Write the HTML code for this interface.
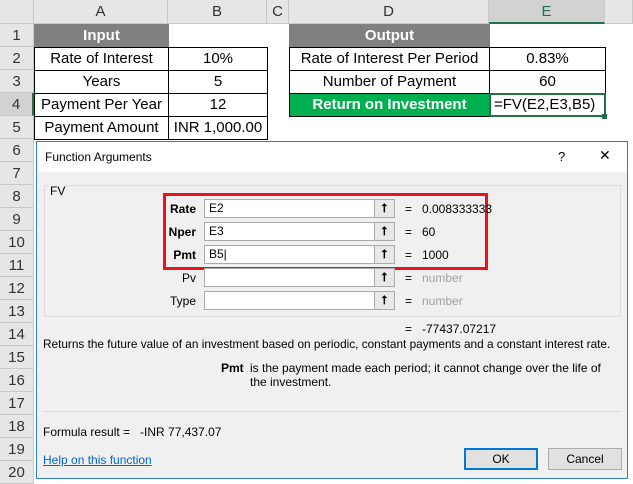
<!DOCTYPE html>
<html><head><style>
*{margin:0;padding:0;box-sizing:border-box}
body{width:633px;height:482px;overflow:hidden;background:#fff;font-family:"Liberation Sans",sans-serif;position:relative}
.a{position:absolute}
.hdr{background:#e6e6e6;color:#333;font-size:15px;text-align:center;border-right:1px solid #c8c8c8;border-bottom:1px solid #c8c8c8}
.rh{background:#e6e6e6;color:#333;font-size:15px;text-align:center;border-bottom:1px solid #c8c8c8;border-right:1px solid #c8c8c8;width:34px;left:0;height:23px;line-height:23px}
.c{font-size:15px;text-align:center;border:1px solid #000;line-height:21px;color:#000}
.g{background:#808080;color:#fff;font-weight:bold}
.dt{font-size:12px;color:#000;font-family:"Liberation Sans",sans-serif}
.lbl{font-size:12px;font-weight:bold;text-align:right;width:60px}
.in{background:#fff;border:1px solid #aaa;height:19px;width:191px;left:204px;font-size:12px;padding-left:4px;line-height:17px}
.btn{left:374px;width:21px;height:19px;border:1px solid #aaa;background:#e8e8e8;font-size:12px;text-align:center;line-height:17px;font-weight:bold}
.eq{left:405px;font-size:12px}
.v{left:422px;font-size:12px}
</style></head><body>
<div class="a hdr" style="left:0;top:0;width:34px;height:24px"></div>
<div class="a hdr" style="left:34px;top:0;width:134px;height:24px;line-height:24px">A</div>
<div class="a hdr" style="left:168px;top:0;width:99px;height:24px;line-height:24px">B</div>
<div class="a hdr" style="left:267px;top:0;width:22px;height:24px;line-height:24px">C</div>
<div class="a hdr" style="left:289px;top:0;width:200px;height:24px;line-height:24px">D</div>
<div class="a hdr" style="left:489px;top:0;width:116px;height:24px;line-height:24px;background:#d2d2d2;color:#217346;border-bottom:2px solid #217346">E</div>
<div class="a hdr" style="left:605px;top:0;width:28px;height:24px"></div>
<div class="a rh" style="top:24px">1</div><div class="a rh" style="top:47px">2</div><div class="a rh" style="top:70px">3</div>
<div class="a rh" style="top:93px;background:#d2d2d2;border-right:2px solid #217346">4</div><div class="a rh" style="top:116px">5</div>
<div class="a rh" style="top:139px">6</div><div class="a rh" style="top:162px">7</div><div class="a rh" style="top:185px">8</div>
<div class="a rh" style="top:208px">9</div><div class="a rh" style="top:231px">10</div><div class="a rh" style="top:254px">11</div>
<div class="a rh" style="top:277px">12</div><div class="a rh" style="top:300px">13</div><div class="a rh" style="top:323px">14</div>
<div class="a rh" style="top:346px">15</div><div class="a rh" style="top:369px">16</div><div class="a rh" style="top:392px">17</div>
<div class="a rh" style="top:415px">18</div><div class="a rh" style="top:438px">19</div><div class="a rh" style="top:461px">20</div>

<div class="a c g" style="left:34px;top:24px;width:135px;height:24px;border-color:#808080">Input</div>
<div class="a c" style="left:34px;top:47px;width:135px;height:24px">Rate of Interest</div>
<div class="a c" style="left:168px;top:47px;width:100px;height:24px">10%</div>
<div class="a c" style="left:34px;top:70px;width:135px;height:24px">Years</div>
<div class="a c" style="left:168px;top:70px;width:100px;height:24px">5</div>
<div class="a c" style="left:34px;top:93px;width:135px;height:24px">Payment Per Year</div>
<div class="a c" style="left:168px;top:93px;width:100px;height:24px">12</div>
<div class="a c" style="left:34px;top:116px;width:135px;height:24px">Payment Amount</div>
<div class="a c" style="left:168px;top:116px;width:100px;height:24px">INR 1,000.00</div>

<div class="a c g" style="left:289px;top:24px;width:201px;height:24px;border-color:#808080">Output</div>
<div class="a c" style="left:289px;top:47px;width:201px;height:24px">Rate of Interest Per Period</div>
<div class="a c" style="left:489px;top:47px;width:117px;height:24px">0.83%</div>
<div class="a c" style="left:289px;top:70px;width:201px;height:24px">Number of Payment</div>
<div class="a c" style="left:489px;top:70px;width:117px;height:24px">60</div>
<div class="a c" style="left:289px;top:93px;width:201px;height:24px;background:#00b050;color:#fff;font-weight:bold">Return on Investment</div>
<div class="a c" style="left:489px;top:93px;width:117px;height:24px;border:2px solid #217346;text-align:left;padding-left:3px;line-height:20px">=FV(E2,E3,B5)</div>
<div class="a" style="left:602px;top:114px;width:5px;height:5px;background:#217346"></div>

<!-- dialog -->
<div class="a" style="left:36px;top:141px;width:592px;height:338px;border:1px solid #2b7cd3;background:#f0f0f0">
  <div class="a" style="left:0;top:0;width:590px;height:30px;background:#fff"></div>
</div>
<div class="a dt" style="left:45px;top:150px;font-size:12px">Function Arguments</div>
<div class="a dt" style="left:558px;top:149px;font-size:13px">?</div>
<div class="a dt" style="left:599px;top:147px;font-size:14px">✕</div>
<div class="a" style="left:44px;top:185px;width:577px;height:132px;border:1px solid #dcdcdc"></div>
<div class="a dt" style="left:49px;top:184px;background:#f0f0f0;padding:0 1px">FV</div>
<div class="a" style="left:163px;top:193px;width:325px;height:77px;border:3px solid #e8131b"></div>

<div class="a lbl" style="left:136px;top:202px">Rate</div>
<div class="a in" style="top:199px">E2</div><div class="a btn" style="top:199px">⭡</div>
<div class="a eq" style="top:202px">=</div><div class="a v" style="top:202px">0.008333333</div>
<div class="a lbl" style="left:136px;top:225px">Nper</div>
<div class="a in" style="top:222px">E3</div><div class="a btn" style="top:222px">⭡</div>
<div class="a eq" style="top:225px">=</div><div class="a v" style="top:225px">60</div>
<div class="a lbl" style="left:136px;top:248px">Pmt</div>
<div class="a in" style="top:245px">B5|</div><div class="a btn" style="top:245px">⭡</div>
<div class="a eq" style="top:248px">=</div><div class="a v" style="top:248px">1000</div>
<div class="a lbl" style="left:136px;top:271px;font-weight:normal">Pv</div>
<div class="a in" style="top:268px"></div><div class="a btn" style="top:268px">⭡</div>
<div class="a eq" style="top:271px">=</div><div class="a v" style="top:271px;color:#a0a0a0">number</div>
<div class="a lbl" style="left:136px;top:294px;font-weight:normal">Type</div>
<div class="a in" style="top:291px"></div><div class="a btn" style="top:291px">⭡</div>
<div class="a eq" style="top:294px">=</div><div class="a v" style="top:294px;color:#a0a0a0">number</div>

<div class="a dt" style="left:405px;top:322px">=&nbsp;&nbsp;&nbsp;-77437.07217</div>
<div class="a dt" style="left:43px;top:337px;font-size:11.8px">Returns the future value of an investment based on periodic, constant payments and a constant interest rate.</div>
<div class="a dt" style="left:221px;top:361px;font-weight:bold">Pmt</div>
<div class="a dt" style="left:250px;top:361px;width:370px;line-height:14px">is the payment made each period; it cannot change over the life of the investment.</div>
<div class="a" style="left:43px;top:411px;width:578px;height:1px;background:#dcdcdc"></div>
<div class="a dt" style="left:43px;top:425px">Formula result =&nbsp;&nbsp;&nbsp;-INR 77,437.07</div>
<div class="a dt" style="left:43px;top:453px;color:#0066cc;text-decoration:underline">Help on this function</div>
<div class="a dt" style="left:464px;top:448px;width:74px;height:22px;border:2px solid #0078d7;background:#e1e1e1;text-align:center;line-height:18px">OK</div>
<div class="a dt" style="left:548px;top:448px;width:74px;height:22px;border:1px solid #adadad;background:#e1e1e1;text-align:center;line-height:20px">Cancel</div>
</body></html>
